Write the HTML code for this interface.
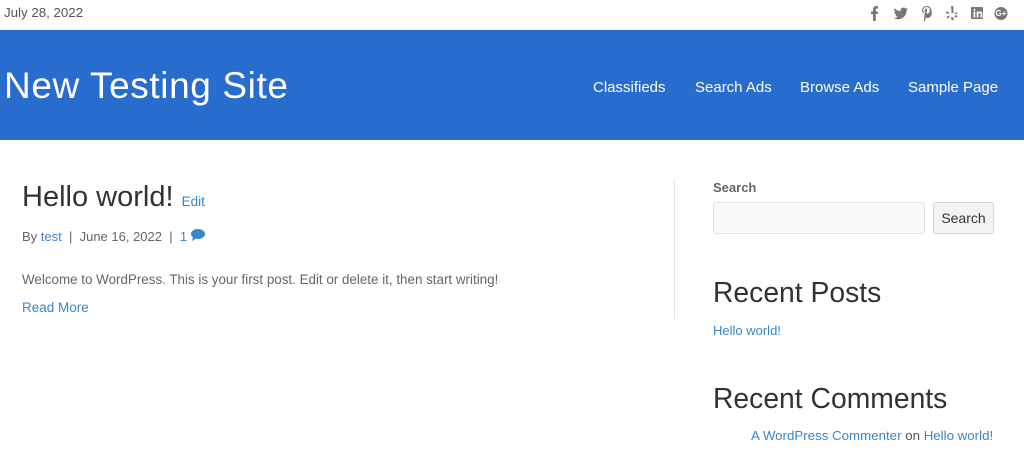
<!DOCTYPE html>
<html><head><meta charset="utf-8"><style>
*{margin:0;padding:0;box-sizing:border-box}
body{width:1024px;height:452px;overflow:hidden;background:#fff;font-family:"Liberation Sans",sans-serif;color:#555;position:relative}
.a{position:absolute;white-space:nowrap}
a{color:#3a86c8;text-decoration:none}
.hdr{position:absolute;left:0;top:30px;width:1024px;height:110px;background:#286ccd}
.nav{color:#fff;font-size:15px;top:79px}
</style></head><body>
<div class="a" style="left:4px;top:5px;font-size:13.3px;color:#555">July 28, 2022</div>
<svg class="a" style="left:866px;top:4px" width="150" height="18" viewBox="0 0 150 18" fill="#777">
<path d="M7 17V10H5V7.5h2V5.5C7 3.5 8 2 10.5 2H12v2.6h-1.2c-.8 0-1 .4-1 1V7.5H12l-.3 2.5H9.8V17z"/>
<path d="M42 5c-.5.3-1.1.4-1.7.5.6-.4 1-.9 1.3-1.6-.6.3-1.2.6-1.9.7a2.9 2.9 0 0 0-5 2.7c-2.4-.1-4.6-1.3-6-3-.8 1.4-.3 3.1.9 3.9-.5 0-.9-.1-1.300-.4 0 1.4 1 2.6 2.3 2.9-.4.1-.9.1-1.3 0 .4 1.2 1.5 2 2.7 2-1.2.9-2.7 1.3-4.3 1.2 1.3.8 2.8 1.3 4.5 1.3 5.4 0 8.5-4.6 8.3-8.7.6-.4 1.1-.9 1.5-1.5z"/>
<path d="M61 2c-3 0-5 2-5 4.5 0 1.2.6 2.4 1.5 2.8l.4-1.2c-.5-.6-.7-1-.7-1.7 0-2 1.5-3.4 3.6-3.4 2 0 3 1.2 3 2.8 0 2-.9 3.8-2.2 3.8-.7 0-1.3-.6-1.1-1.4.2-.9.6-1.900.6-2.6 0-.6-.3-1.1-1-1.1-.8 0-1.4.8-1.4 1.9 0 .7.2 1.1.2 1.1L58 15.5c-.2 1 0 2.2 0 2.5h.2c.3-.4 1-1.8 1.3-3l.5-1.9c.3.5 1 .9 1.8.9 2.4 0 4-2.2 4-5.1C65.8 4.3 64 2 61 2z"/>
<g transform="translate(2,0)"><path d="M83 2l2.2 0 .3 7-1.8.4zM78.5 7l2.6 1.5-.6 1.4-2.6-.8zM78.5 13l2.3-1.4.8 1.2-1.8 1.9zM83 14l.6-1.2 2 .9-.1 2.5h-1.7zM86.5 11.7l2.6-.6.3 1.7-2.4 1.1zM86.5 9.4l2.4-1.4.6 1.6-2.5.8z"/></g>
<path d="M106 3h10c.6 0 1 .4 1 1v10c0 .6-.4 1-1 1h-10c-.6 0-1-.4-1-1V4c0-.6.4-1 1-1zm1.5 4.5v6h1.8v-6zm.9-2.8a1 1 0 1 0 0 2 1 1 0 0 0 0-2zm2.3 2.8v6h1.8v-3.2c0-.9.5-1.3 1.1-1.3.6 0 .9.4.9 1.3v3.2h1.8V10c0-1.8-1-2.6-2.2-2.6-.8 0-1.4.4-1.6.8v-.7z"/>
<circle cx="135" cy="9.5" r="6.5"/>
</svg>
<div class="a" style="left:992px;top:7px;width:18px;text-align:center;font-size:8px;font-weight:bold;color:#fff;line-height:14px">G+</div>
<div class="hdr"></div>
<div class="a" style="left:4px;top:65px;color:#fff;font-size:37px;letter-spacing:0.6px">New Testing Site</div>
<div class="a nav" style="left:593px">Classifieds</div>
<div class="a nav" style="left:695px">Search Ads</div>
<div class="a nav" style="left:800px">Browse Ads</div>
<div class="a nav" style="left:908px">Sample Page</div>
<div class="a" style="left:22px;top:181px;font-size:29px;color:#333">Hello world! <a style="font-size:13.5px">Edit</a></div>
<div class="a" style="left:22px;top:229px;font-size:13px;color:#666">By <a>test</a> &nbsp;| &nbsp;June 16, 2022 &nbsp;| &nbsp;<a>1 <svg width="14" height="12" viewBox="0 0 14 12" style="vertical-align:0"><ellipse cx="7" cy="5" rx="7" ry="5" fill="#3a86c8"/><path d="M2 8L1 12 6 9z" fill="#3a86c8"/></svg></a></div>
<div class="a" style="left:22px;top:272px;font-size:13.4px;color:#666">Welcome to WordPress. This is your first post. Edit or delete it, then start writing!</div>
<div class="a" style="left:22px;top:300px;font-size:13.5px"><a>Read More</a></div>
<div class="a" style="left:674px;top:179px;width:1px;height:140px;background:#e5e5e5"></div>
<div class="a" style="left:713px;top:180px;font-size:13px;font-weight:bold;color:#666">Search</div>
<div class="a" style="left:713px;top:202px;width:212px;height:32px;border:1px solid #e3e3e3;border-radius:3px;background:#fafafa"></div>
<div class="a" style="left:933px;top:202px;width:61px;height:32px;border:1px solid #d5d5d5;border-radius:3px;background:#f3f3f3;font-size:14px;color:#333;text-align:center;line-height:30px">Search</div>
<div class="a" style="left:713px;top:276px;font-size:28.3px;color:#333">Recent Posts</div>
<div class="a" style="left:713px;top:323px;font-size:13px"><a>Hello world!</a></div>
<div class="a" style="left:713px;top:382px;font-size:28.3px;color:#333">Recent Comments</div>
<div class="a" style="left:751px;top:428px;font-size:13.3px;color:#555"><a>A WordPress Commenter</a> on <a>Hello world!</a></div>
</body></html>
